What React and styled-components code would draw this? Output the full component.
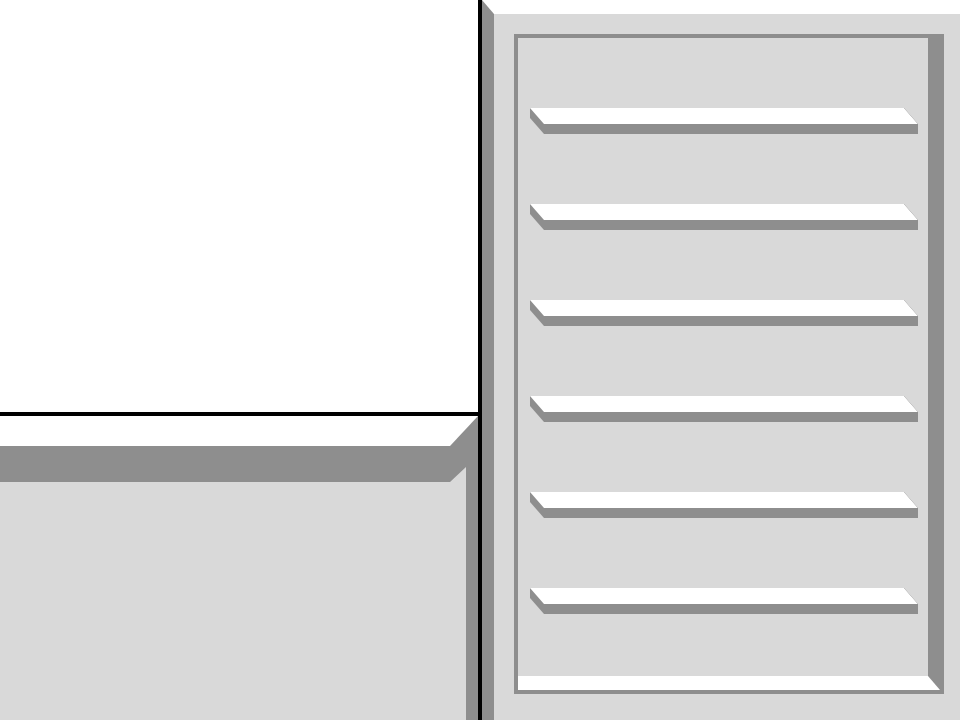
import React from "react";
import styled, { createGlobalStyle } from "styled-components";

const LIGHT = "#d9d9d9";
const DARK = "#8e8e8e";

const Global = createGlobalStyle`
  html, body { margin: 0; padding: 0; background: #ffffff; }
  body { font-family: "Liberation Sans", Arial, sans-serif; }
`;

const Screen = styled.div`
  width: 960px;
  height: 720px;
  overflow: hidden;
  display: grid;
  grid-template-columns: 482px 478px;
`;

const LeftColumn = styled.div`
  display: flex;
  flex-direction: column;
  border-right: 4px solid #000;
  height: 720px;
`;

const Canvas = styled.div`
  height: 412px;
  background: #ffffff;
  border-bottom: 4px solid #000;
  flex: none;
`;

const LowerPanel = styled.div`
  flex: 1;
  display: flex;
  flex-direction: column;
  background: ${LIGHT};
`;

const Ledge = styled.div`
  height: 66px;
  flex: none;
  background: ${DARK};
  clip-path: polygon(0 0, 100% 0, 100% 100%, calc(100% - 12px) 100%, calc(100% - 12px) 51px, calc(100% - 28px) 100%, 0 100%);
`;

const LedgeTop = styled.div`
  height: 30px;
  background: #ffffff;
  clip-path: polygon(0 0, 100% 0, calc(100% - 28px) 100%, 0 100%);
`;

const LowerBody = styled.div`
  flex: 1;
  display: flex;
`;

const LowerFill = styled.div`
  flex: 1;
  background: ${LIGHT};
`;

const LowerEdge = styled.div`
  width: 12px;
  background: ${DARK};
`;

const RightPanel = styled.div`
  height: 720px;
  box-sizing: border-box;
  background: ${LIGHT};
  border-top: 14px solid #ffffff;
  border-left: 12px solid ${DARK};
  padding: 20px 16px 0 20px;
`;

const Frame = styled.div`
  width: 430px;
  height: 660px;
  box-sizing: border-box;
  border: 4px solid ${DARK};
  display: flex;
`;

const Rack = styled.div`
  flex: 1;
  box-sizing: border-box;
  border-right: 12px solid ${DARK};
  border-bottom: 14px solid #ffffff;
  padding: 70px 10px 0 12px;
  display: flex;
  flex-direction: column;
  gap: 70px;
`;

const Shelf = styled.div`
  height: 26px;
  background: ${DARK};
  clip-path: polygon(0 0, calc(100% - 14px) 0, 100% 16px, 100% 100%, 14px 100%, 0 10px);
`;

const ShelfTop = styled.div`
  height: 16px;
  background: #ffffff;
  clip-path: polygon(0 0, calc(100% - 14px) 0, 100% 100%, 14px 100%);
`;

const shelves = [0, 1, 2, 3, 4, 5];

export default function App() {
  return (
    <>
      <Global />
      <Screen>
        <LeftColumn>
          <Canvas />
          <LowerPanel>
            <Ledge>
              <LedgeTop />
            </Ledge>
            <LowerBody>
              <LowerFill />
              <LowerEdge />
            </LowerBody>
          </LowerPanel>
        </LeftColumn>
        <RightPanel>
          <Frame>
            <Rack>
              {shelves.map((i) => (
                <Shelf key={i}>
                  <ShelfTop />
                </Shelf>
              ))}
            </Rack>
          </Frame>
        </RightPanel>
      </Screen>
    </>
  );
}
